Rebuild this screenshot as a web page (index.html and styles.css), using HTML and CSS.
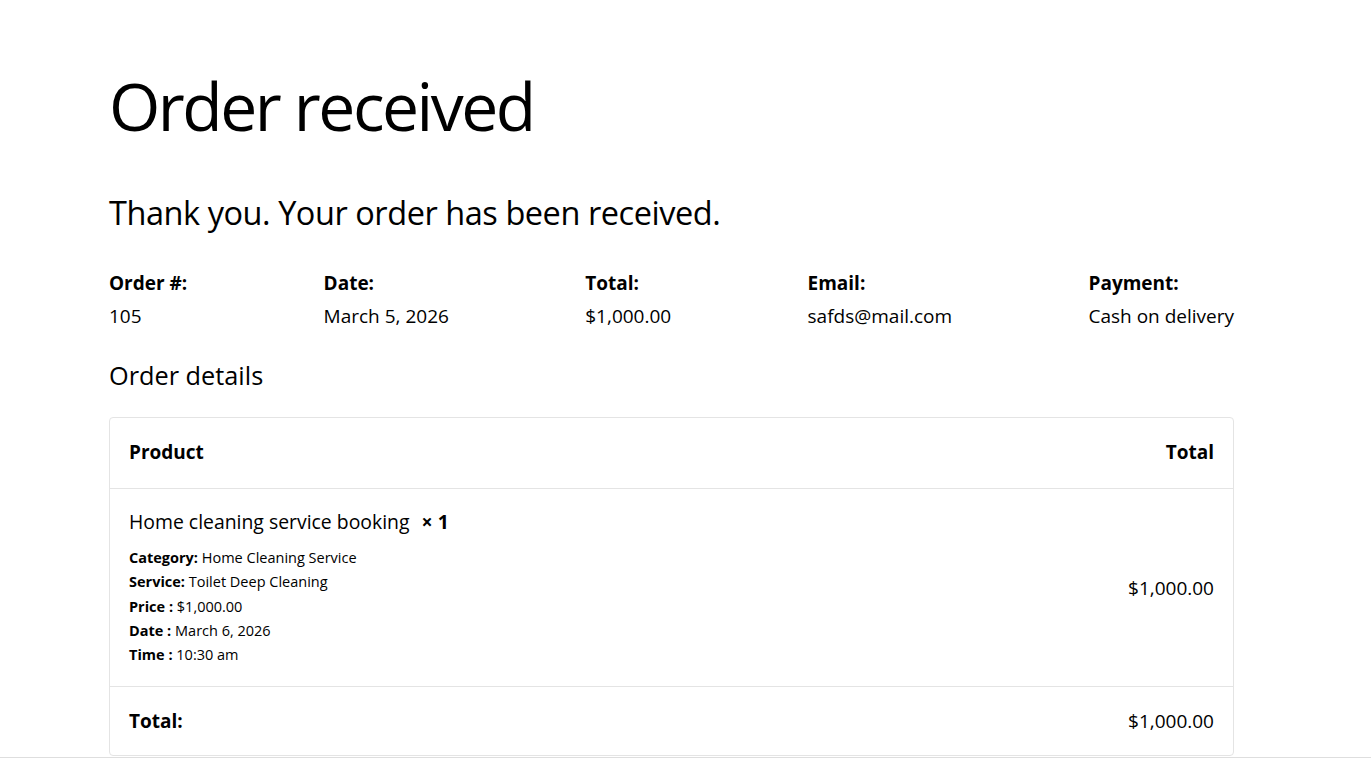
FILE: index.html
```html
<!DOCTYPE html>
<html lang="en">
<head>
<meta charset="utf-8">
<title>Order received</title>
<link rel="stylesheet" href="styles.css">
</head>
<body>
<main class="page">
  <h1 class="title">Order received</h1>
  <p class="thanks">Thank you. Your order has been received.</p>
  <ul class="overview">
    <li class="overview-item"><span class="label">Order #:</span><span class="value">105</span></li>
    <li class="overview-item"><span class="label">Date:</span><span class="value">March 5, 2026</span></li>
    <li class="overview-item"><span class="label">Total:</span><span class="value">$1,000.00</span></li>
    <li class="overview-item"><span class="label">Email:</span><span class="value">safds@mail.com</span></li>
    <li class="overview-item"><span class="label">Payment:</span><span class="value">Cash on delivery</span></li>
  </ul>
  <h2 class="details-title">Order details</h2>
  <div class="table-wrap">
    <table class="order-table">
      <thead>
        <tr><th class="col-product">Product</th><th class="col-total">Total</th></tr>
      </thead>
      <tbody>
        <tr>
          <td class="col-product item-cell">
            <div class="item-name">Home cleaning service booking <strong class="qty">&times;&nbsp;1</strong></div>
            <ul class="item-meta">
              <li><strong>Category:</strong> Home Cleaning Service</li>
              <li><strong>Service:</strong> Toilet Deep Cleaning</li>
              <li><strong>Price :</strong> $1,000.00</li>
              <li><strong>Date :</strong> March 6, 2026</li>
              <li><strong>Time :</strong> 10:30 am</li>
            </ul>
          </td>
          <td class="col-total price-cell">$1,000.00</td>
        </tr>
      </tbody>
      <tfoot>
        <tr><th class="col-product foot-label">Total:</th><td class="col-total foot-value">$1,000.00</td></tr>
      </tfoot>
    </table>
  </div>
</main>
<div class="page-rule"></div>
</body>
</html>
```

FILE: styles.css
```css
html, body {
  margin: 0;
  padding: 0;
  background: #fff;
}

body {
  font-family: "Open Sans", "Noto Sans", sans-serif;
  color: #000;
}

.page {
  width: 1125px;
  margin-left: 109px;
  padding-top: 65px;
}

.title {
  margin: 0;
  font-size: 66px;
  line-height: 80px;
  font-weight: 400;
  letter-spacing: -2.5px;
}

.thanks {
  margin: 48px 0 0;
  font-size: 32.5px;
  line-height: 40px;
  letter-spacing: -0.45px;
}

.overview {
  list-style: none;
  margin: 37px 0 0;
  padding: 0;
  display: flex;
  justify-content: space-between;
}

.overview-item {
  display: flex;
  flex-direction: column;
  gap: 7px;
  font-size: 19px;
  line-height: 26px;
}

.label {
  font-weight: 700;
}

.details-title {
  margin: 30px 0 0;
  font-size: 25.3px;
  line-height: 32px;
  font-weight: 400;
}

.table-wrap {
  margin-top: 26px;
  border: 1px solid #e4e4e4;
  border-radius: 4px;
  overflow: hidden;
}

.order-table {
  width: 100%;
  border-collapse: collapse;
  font-size: 19px;
  line-height: 26px;
}

.order-table th,
.order-table td {
  padding: 21px 19px;
  text-align: left;
  vertical-align: middle;
}

.order-table thead th {
  padding-bottom: 23px;
  border-bottom: 1px solid #e4e4e4;
  font-weight: 700;
}

.order-table .col-total {
  text-align: right;
}

.order-table .item-cell {
  padding-top: 20px;
  padding-bottom: 19px;
}

.price-cell {
  font-weight: 400;
}

.item-name {
  font-size: 19.4px;
  line-height: 26px;
}

.qty {
  margin-left: 7px;
  font-weight: 700;
}

.item-meta {
  list-style: none;
  margin: 11px 0 0;
  padding: 0;
  font-size: 14.5px;
  line-height: 24.25px;
}

.order-table tfoot th,
.order-table tfoot td {
  border-top: 1px solid #e4e4e4;
}

.foot-label {
  font-weight: 700;
}

.page-rule {
  margin-top: 1px;
  border-top: 1px solid #dedede;
}
```
